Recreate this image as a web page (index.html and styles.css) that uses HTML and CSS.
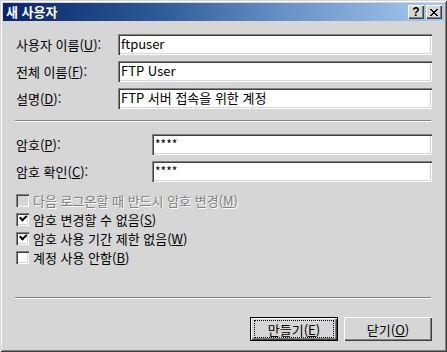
FILE: index.html
```html
<!DOCTYPE html>
<html lang="ko">
<head>
    <meta charset="UTF-8">
    <title>새 사용자</title>
    <link rel="stylesheet" href="styles.css">
</head>
<body>
    <div class="window">
        <div class="titlebar">
            <span class="title">새 사용자</span>
            <div class="caption-buttons">
                <span class="cap-btn help">?</span>
                <span class="cap-btn">
                    <svg width="8" height="7" viewBox="0 0 8 7">
                        <path d="M0 0h2v1h1v1h2v-1h1v-1h2v1h-1v1h-1v1h-1v1h1v1h1v1h1v1h-2v-1h-1v-1h-2v1h-1v1h-2v-1h1v-1h1v-1h1v-1h-1v-1h-1v-1h-1z" fill="#000"/>
                    </svg>
                </span>
            </div>
        </div>

        <div class="content">
            <div class="fields">
                <div class="field">
                    <label>사용자 이름(<u>U</u>):</label>
                    <div class="input">ftpuser</div>
                </div>
                <div class="field">
                    <label>전체 이름(<u>F</u>):</label>
                    <div class="input">FTP User</div>
                </div>
                <div class="field">
                    <label>설명(<u>D</u>):</label>
                    <div class="input">FTP 서버 접속을 위한 계정</div>
                </div>
            </div>

            <div class="sep sep-top"></div>

            <div class="fields pw">
                <div class="field">
                    <label>암호(<u>P</u>):</label>
                    <div class="input stars">****</div>
                </div>
                <div class="field">
                    <label>암호 확인(<u>C</u>):</label>
                    <div class="input stars">****</div>
                </div>
            </div>

            <div class="checks">
                <div class="check disabled"><span class="box"></span><span>다음 로그온할 때 반드시 암호 변경(<u>M</u>)</span></div>
                <div class="check"><span class="box checked"></span><span>암호 변경할 수 없음(<u>S</u>)</span></div>
                <div class="check"><span class="box checked"></span><span>암호 사용 기간 제한 없음(<u>W</u>)</span></div>
                <div class="check"><span class="box"></span><span>계정 사용 안함(<u>B</u>)</span></div>
            </div>

            <div class="sep sep-bottom"></div>

            <div class="buttons">
                <div class="btn default"><span class="focus">만들기(<u>E</u>)</span></div>
                <div class="btn">닫기(<u>O</u>)</div>
            </div>
        </div>
    </div>
</body>
</html>
```

FILE: styles.css
```css
/* 기본 */
body {
    margin: 0;
    background: #d6d6d6;
    font-family: "Noto Sans CJK KR", "Noto Sans", sans-serif;
    font-size: 13px;
    color: #000;
}

u {
    text-decoration: underline;
    text-underline-offset: 1px;
}

/* 창 테두리 */
.window {
    width: 447px;
    height: 352px;
    box-sizing: border-box;
    padding: 3px;
    background: #d6d6d6;
    box-shadow: inset 1px 1px #d6d6d6, inset -1px -1px #404040,
                inset 2px 2px #fff, inset -2px -2px #808080;
}

/* 제목 표시줄 */
.titlebar {
    height: 18px;
    display: flex;
    align-items: center;
    justify-content: space-between;
    padding: 0 2px 0 3px;
    background: linear-gradient(to right, #0a246a, #2c5a96 35%, #6b93c8 65%, #a6caf0);
}

.title {
    color: #fff;
    font-weight: bold;
    font-size: 13px;
    line-height: 18px;
}

.caption-buttons {
    display: flex;
    gap: 2px;
}

.cap-btn {
    width: 16px;
    height: 14px;
    box-sizing: border-box;
    background: #d6d6d6;
    display: flex;
    align-items: center;
    justify-content: center;
    box-shadow: inset 1px 1px #fff, inset -1px -1px #404040, inset -2px -2px #808080;
}

.cap-btn.help {
    font-family: "Liberation Sans", sans-serif;
    font-weight: bold;
    font-size: 12px;
    line-height: 14px;
}

/* 본문 */
.content {
    padding: 13px 12px 0 13px;
}

.fields {
    display: flex;
    flex-direction: column;
    gap: 6px;
}

.field {
    display: flex;
    align-items: center;
    height: 21px;
}

.field label {
    width: 102px;
    flex: none;
}

.pw .field label {
    width: 136px;
}

.input {
    flex: 1;
    height: 21px;
    box-sizing: border-box;
    background: #fff;
    padding: 0 3px;
    line-height: 20px;
    white-space: nowrap;
    box-shadow: inset 1px 1px #808080, inset 2px 2px #404040,
                inset -1px -1px #fff, inset -2px -2px #d6d6d6;
}

.input.stars {
    font-size: 12px;
}

/* 구분선 */
.sep {
    height: 0;
    border-top: 1px solid #808080;
    border-bottom: 1px solid #fff;
    margin-left: -1px;
    margin-right: 1px;
}

.sep-top {
    margin-top: 11px;
    margin-bottom: 12px;
}

.sep-bottom {
    margin-top: 30px;
    margin-bottom: 18px;
}

/* 체크박스 */
.checks {
    margin-top: 9px;
    display: flex;
    flex-direction: column;
}

.check {
    height: 19px;
    display: flex;
    align-items: center;
    gap: 4px;
}

.check.disabled {
    color: #808080;
    text-shadow: 1px 1px #fff;
}

.box {
    width: 13px;
    height: 13px;
    box-sizing: border-box;
    background: #fff;
    flex: none;
    position: relative;
    box-shadow: inset 1px 1px #808080, inset 2px 2px #404040,
                inset -1px -1px #fff, inset -2px -2px #d6d6d6;
}

.disabled .box {
    background: #d6d6d6;
}

.box.checked::after {
    content: "";
    position: absolute;
    left: 3px;
    top: 5px;
    width: 5px;
    height: 3px;
    border-left: 2px solid #000;
    border-bottom: 2px solid #000;
    transform: rotate(-45deg);
    transform-origin: 0 0;
}

/* 버튼 */
.buttons {
    display: flex;
    justify-content: flex-end;
    gap: 6px;
}

.btn {
    width: 88px;
    height: 24px;
    box-sizing: border-box;
    display: flex;
    align-items: center;
    justify-content: center;
    background: #d6d6d6;
    box-shadow: inset 1px 1px #fff, inset -1px -1px #404040, inset -2px -2px #808080;
}

.btn.default {
    border: 1px solid #000;
}

.btn .focus {
    width: 80px;
    height: 18px;
    box-sizing: border-box;
    border: 1px dotted #000;
    display: flex;
    align-items: center;
    justify-content: center;
}
```
